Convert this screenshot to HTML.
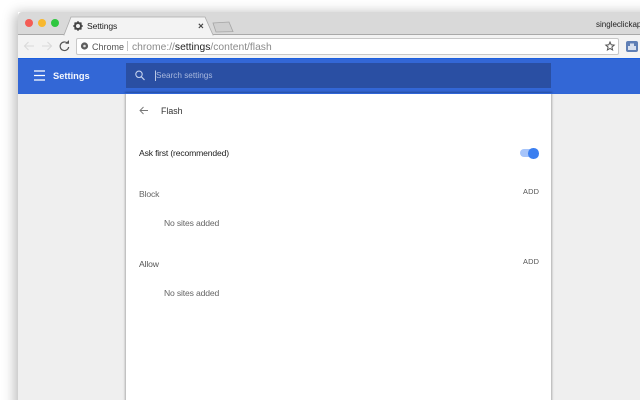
<!DOCTYPE html>
<html><head><meta charset="utf-8">
<style>
html,body{margin:0;padding:0;width:640px;height:400px;overflow:hidden;background:#fff}
body{font-family:"Liberation Sans",sans-serif}
#r{position:absolute;left:0;top:0;width:640px;height:400px;overflow:hidden;background:#fff;filter:blur(.3px)}
.a{position:absolute;white-space:nowrap}
svg{position:absolute;overflow:visible}
</style></head><body><div id="r">
<div class="a" style="left:18px;top:12px;width:640px;height:400px;box-shadow:-3px 1px 12px rgba(0,0,0,.28)"></div>
<div class="a" style="left:18px;top:12px;width:622px;height:23px;background:#d9d9d9;border-radius:4px 0 0 0"></div>
<div class="a" style="left:18px;top:34px;width:622px;height:1px;background:#a9a9a9"></div>
<div class="a" style="left:18px;top:35px;width:622px;height:23px;background:#f3f3f3"></div>
<div class="a" style="left:25px;top:19px;width:8px;height:8px;border-radius:50%;background:#f45c55"></div>
<div class="a" style="left:38px;top:19px;width:8px;height:8px;border-radius:50%;background:#f8b82e"></div>
<div class="a" style="left:51px;top:19px;width:8px;height:8px;border-radius:50%;background:#2fc73f"></div>
<div class="a" style="left:76px;top:38px;width:541px;height:15px;background:#fff;border:1px solid #c8c8c8;border-radius:2px"></div>
<svg style="left:0;top:0" width="640" height="60">
<path d="M64 35 L71 17 H205 L213 35Z" fill="#f3f3f3" stroke="#ababab" stroke-width=".8"/>
<path d="M64.500 35 H212.500" stroke="#f3f3f3" stroke-width="1.600"/>
<path d="M213 23 L216 32 L233 31.600 L229 22 Z" fill="#cfcfcf" stroke="#a5a5a5" stroke-width=".8"/>
<path d="M198.800 23.800 L203 28 M203 23.800 L198.800 28" stroke="#444" stroke-width="1.100"/>
<circle cx="78" cy="26" r="3" fill="none" stroke="#444" stroke-width="2"/>
<path d="M78 21.200V30.800M73.200 26H82.800M74.600 22.600L81.400 29.400M81.400 22.600L74.600 29.400" stroke="#444" stroke-width="1.600" stroke-dasharray="2 5.600"/>
<path d="M34 46 H24.500 M28.500 42 L24.500 46 L28.500 50" fill="none" stroke="#dadada" stroke-width="1.100"/>
<path d="M42 46 H51.500 M47.500 42 L51.500 46 L47.500 50" fill="none" stroke="#dadada" stroke-width="1.100"/>
<path d="M67.500 43.200 A4.300 4.300 0 1 0 68.700 47" fill="none" stroke="#555" stroke-width="1.200"/>
<path d="M65.200 43.800 H69 V40Z" fill="#555"/>
<circle cx="84.500" cy="46" r="3.600" fill="#5f5f5f"/><circle cx="84.500" cy="46" r="1.300" fill="#ddd"/>
<path d="M610 42 L611.200 44.800 L614.200 45.100 L611.900 47.100 L612.600 50 L610 48.400 L607.400 50 L608.100 47.100 L605.800 45.100 L608.800 44.800Z" fill="none" stroke="#555" stroke-width="1"/>
<rect x="626" y="41" width="12" height="11" rx="2" fill="#5f7fb5"/>
<path d="M628 50 V46 H630 V43.500 H634 V46 H636 V50Z" fill="#d8e0ee"/>
</svg>
<div class="a" style="left:87px;top:20.500px;font-size:8.600px;letter-spacing:-.1px;line-height:11px;color:#222">Settings</div>
<div class="a" style="left:596px;top:18.500px;font-size:8px;line-height:11px;color:#222">singleclickap</div>
<div class="a" style="left:92px;top:40.500px;font-size:9px;line-height:12px;color:#555">Chrome</div>
<div class="a" style="left:127px;top:41px;width:1px;height:10px;background:#c4c4c4"></div>
<div class="a" style="left:132px;top:40.500px;font-size:10.300px;line-height:12px;color:#8a8a8a"><span style="position:relative;top:1px">chrome://<span style="color:#222">settings</span>/content/flash</span></div>
<div class="a" style="left:18px;top:58px;width:622px;height:35px;background:#3367d6;border-top:1px solid #1a5fe0;box-sizing:border-box"></div>
<div class="a" style="left:126px;top:63px;width:425px;height:25px;background:#2a4fa3"></div>
<svg style="left:0;top:0" width="640" height="100">
<path d="M34 71 H45 M34 75.500 H45 M34 80 H45" stroke="#fff" stroke-width="1.300"/>
<circle cx="139" cy="74.300" r="3.200" fill="none" stroke="#c5d2ee" stroke-width="1.100"/>
<path d="M141.400 76.800 L144.500 80" stroke="#c5d2ee" stroke-width="1.200"/>
<path d="M155.500 70.500 V81" stroke="#dfe6f6" stroke-width=".8"/>
</svg>
<div class="a" style="left:53px;top:70px;font-size:9.300px;line-height:13px;font-weight:bold;color:#f4f7fd;">Settings</div>
<div class="a" style="left:156px;top:69.500px;font-size:8.200px;line-height:12px;color:#a9b9de">Search settings</div>
<div class="a" style="left:18px;top:93px;width:622px;height:307px;background:#efefef"></div>
<div class="a" style="left:126px;top:93px;width:425px;height:320px;background:#fff;box-shadow:0 0 2px 1px rgba(0,0,0,.28)"></div>
<div class="a" style="left:18px;top:92.500px;width:622px;height:1.500px;background:#2f66d8"></div>
<svg style="left:0;top:0" width="640" height="170">
<path d="M148 110.500 H140 M143.500 107 L140 110.500 L143.500 114" fill="none" stroke="#777" stroke-width=".9"/>
</svg>
<div class="a" style="left:161px;top:104.500px;font-size:8.800px;line-height:12px;color:#333">Flash</div>
<div class="a" style="left:139px;top:147px;font-size:8.600px;letter-spacing:-.16px;line-height:12px;color:#222">Ask first (recommended)</div>
<div class="a" style="left:519.500px;top:149px;width:16px;height:8px;border-radius:4px;background:#a6c4fa"></div>
<div class="a" style="left:528px;top:148px;width:10.500px;height:10.500px;border-radius:50%;background:#3b7ff0"></div>
<div class="a" style="left:139px;top:188px;font-size:8.600px;letter-spacing:-.16px;line-height:12px;color:#666">Block</div>
<div class="a" style="left:523px;top:185.500px;font-size:7.400px;line-height:11px;color:#555;letter-spacing:.15px">ADD</div>
<div class="a" style="left:164px;top:217px;font-size:8.600px;letter-spacing:-.16px;line-height:12px;color:#666">No sites added</div>
<div class="a" style="left:139px;top:258px;font-size:8.600px;letter-spacing:-.16px;line-height:12px;color:#555">Allow</div>
<div class="a" style="left:523px;top:255.500px;font-size:7.400px;line-height:11px;color:#555;letter-spacing:.15px">ADD</div>
<div class="a" style="left:164px;top:287px;font-size:8.600px;letter-spacing:-.16px;line-height:12px;color:#666">No sites added</div>
</div></body></html>
